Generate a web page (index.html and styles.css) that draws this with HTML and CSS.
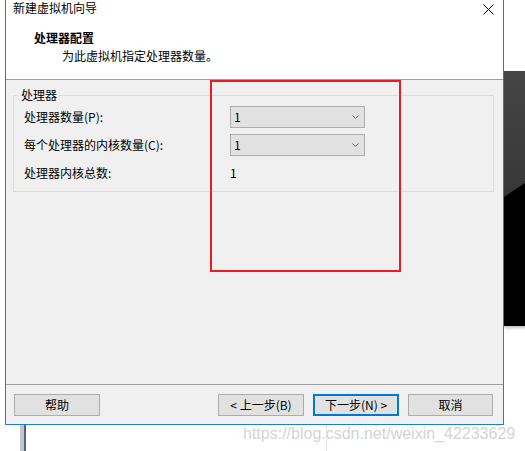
FILE: index.html
```html
<!DOCTYPE html>
<html lang="zh-CN">
<head>
<meta charset="utf-8">
<title>新建虚拟机向导</title>
<link rel="stylesheet" href="styles.css">
</head>
<body>
<div class="desktop">
  <div class="bg-window"></div>
  <div class="side-bar"></div>
  <div class="v-line"></div>

  <div class="dialog">
    <div class="header">
      <div class="titlebar">
        <span class="title">新建虚拟机向导</span>
        <svg class="close" width="11" height="11" viewBox="0 0 11 11"><path d="M0.5 0.5 L10.5 10.5 M10.5 0.5 L0.5 10.5" stroke="#000" stroke-width="1" fill="none"/></svg>
      </div>
      <div class="heading">处理器配置</div>
      <div class="subtitle">为此虚拟机指定处理器数量。</div>
    </div>
    <div class="hr"></div>
    <div class="content">
      <fieldset class="group">
        <legend>处理器</legend>
        <div class="rows">
          <span class="label">处理器数量(P):</span>
          <div class="combo"><span>1</span><svg width="7" height="4" viewBox="0 0 7 4"><polyline points="0.5,0.5 3.5,3.5 6.5,0.5" stroke="#606060" fill="none"/></svg></div>
          <span class="label">每个处理器的内核数量(C):</span>
          <div class="combo"><span>1</span><svg width="7" height="4" viewBox="0 0 7 4"><polyline points="0.5,0.5 3.5,3.5 6.5,0.5" stroke="#606060" fill="none"/></svg></div>
          <span class="label">处理器内核总数:</span>
          <span class="value">1</span>
        </div>
      </fieldset>
    </div>
    <div class="hr"></div>
    <div class="footer">
      <button class="btn">帮助</button>
      <div class="spacer"></div>
      <button class="btn">&lt; 上一步(B)</button>
      <button class="btn default">下一步(N) &gt;</button>
      <button class="btn cancel">取消</button>
    </div>
  </div>

  <div class="watermark">https://blog.csdn.net/weixin_42233629</div>
  <div class="annotation"></div>
</div>
</body>
</html>
```

FILE: styles.css
```css
html, body {
  margin: 0;
  padding: 0;
  background: #ffffff;
}
body {
  font-family: "Noto Sans CJK SC", "Noto Sans", sans-serif;
  font-size: 12px;
  line-height: 16px;
  color: #000;
  overflow: hidden;
}
.desktop {
  position: relative;
  width: 525px;
  height: 451px;
  overflow: hidden;
}
.bg-window {
  position: absolute;
  left: 504px;
  top: 71px;
  width: 30px;
  height: 255px;
  background: linear-gradient(to bottom, #454545, #2a2a2a);
  box-shadow: 0 2px 3px rgba(0,0,0,0.25);
}
.bg-window::after {
  content: "";
  position: absolute;
  inset: 0;
  background: #000;
  clip-path: polygon(0 126px, 21px 112px, 100% 108px, 100% 100%, 0 100%);
}
.side-bar {
  position: absolute;
  left: 20px;
  top: 424px;
  width: 4px;
  height: 30px;
  background: #c3c6d4;
  border-right: 2px solid #5f6068;
}
.v-line {
  position: absolute;
  left: 326px;
  top: 424px;
  width: 1px;
  height: 30px;
  background: #e4e4e4;
}
.dialog {
  position: absolute;
  left: 5px;
  top: -1px;
  width: 499px;
  height: 426px;
  box-sizing: border-box;
  border: 1px solid #1a7fd4;
  display: flex;
  flex-direction: column;
  background: #f0f0f0;
}
.header {
  height: 79px;
  background: #fff;
}
.titlebar {
  height: 16px;
  display: flex;
  justify-content: space-between;
  align-items: center;
  padding: 0 9px 0 7px;
}
.close {
  display: block;
  margin-top: 2px;
}
.heading {
  margin-top: 14px;
  padding-left: 28px;
  font-weight: bold;
}
.subtitle {
  margin-top: 2px;
  padding-left: 56px;
}
.hr {
  height: 1px;
  background: #a0a0a0;
}
.content {
  height: 304px;
  box-sizing: border-box;
  padding: 7px 9px 0 7px;
}
.group {
  margin: 0;
  border: 1px solid #dcdcdc;
  padding: 3px 10px 7px 10px;
}
.group legend {
  padding: 0 2px;
  margin-left: -5px;
  line-height: 16px;
}
.rows {
  display: grid;
  grid-template-columns: 206px 135px;
  grid-auto-rows: 22px;
  row-gap: 6px;
  align-items: center;
}
.combo {
  height: 22px;
  box-sizing: border-box;
  border: 1px solid #adadad;
  background: #e1e1e1;
  display: flex;
  align-items: center;
  justify-content: space-between;
  padding: 0 5px 0 3px;
}
.combo svg {
  display: block;
}
.footer {
  height: 39px;
  box-sizing: border-box;
  display: flex;
  align-items: flex-start;
  padding: 9px 10px 0 8px;
  gap: 9px;
}
.spacer {
  flex: 1;
}
.btn {
  width: 86px;
  height: 22px;
  box-sizing: border-box;
  border: 1px solid #adadad;
  background: #e1e1e1;
  font-family: inherit;
  font-size: 12px;
  line-height: 16px;
  color: #000;
  padding: 0;
  margin: 0;
}
.btn.default {
  border: 2px solid #0078d7;
}
.btn.cancel {
  width: 85px;
}
.watermark {
  position: absolute;
  left: 243px;
  top: 425px;
  font-family: "Liberation Sans", Arial, sans-serif;
  font-size: 16px;
  line-height: 17px;
  color: #d4d4d4;
  white-space: nowrap;
}
.annotation {
  position: absolute;
  left: 210px;
  top: 80px;
  width: 191px;
  height: 192px;
  box-sizing: border-box;
  border: 2px solid #ec1c24;
}
```
